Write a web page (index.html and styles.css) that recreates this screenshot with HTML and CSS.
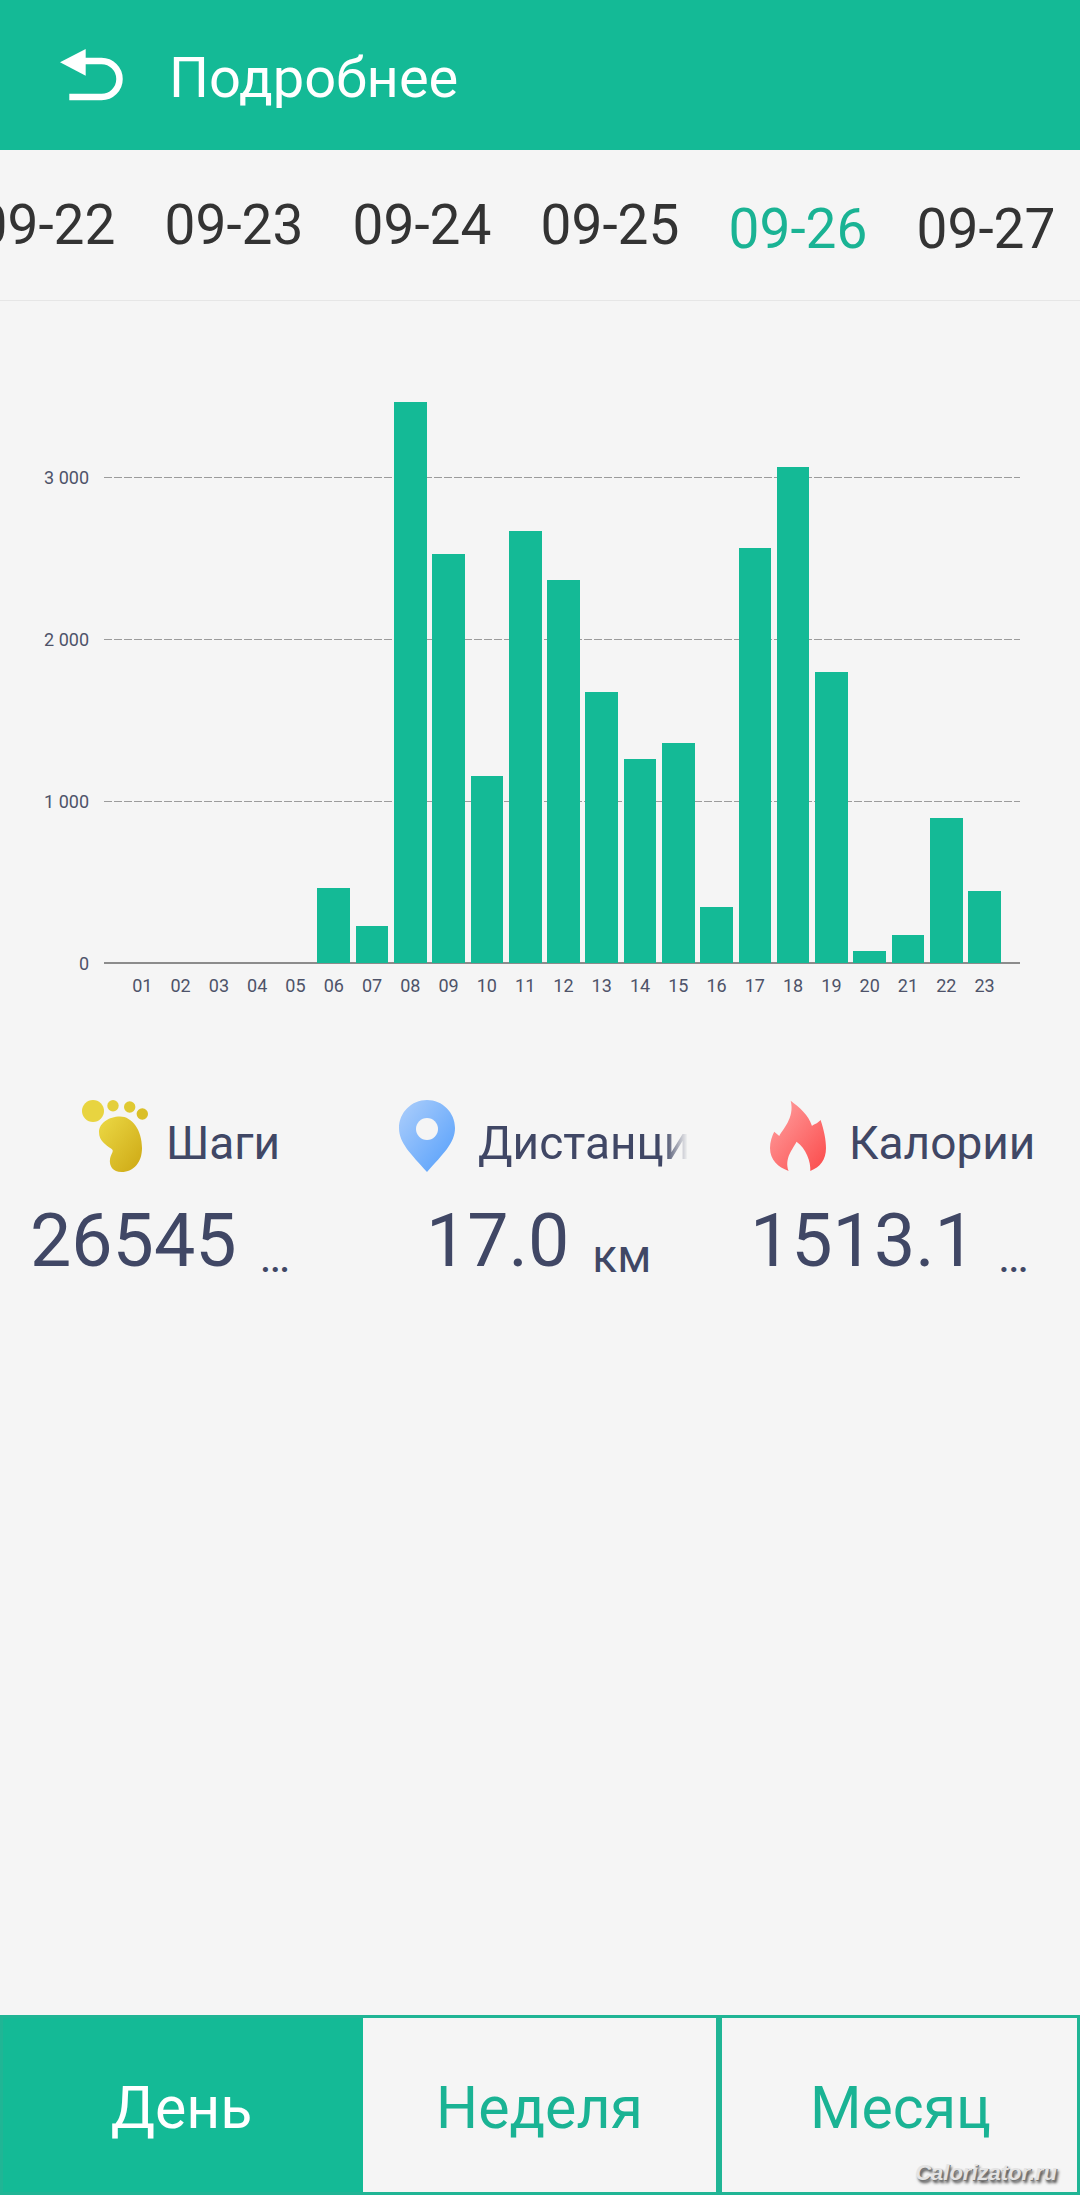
FILE: index.html
```html
<!DOCTYPE html>
<html lang="ru">
<head>
    <meta charset="UTF-8">
    <meta name="viewport" content="width=device-width, initial-scale=1.0">
    <title>Подробнее</title>
    <link rel="stylesheet" href="styles.css">
</head>
<body>
    <header class="topbar">
        <svg class="back-icon" width="64" height="52" viewBox="0 0 64 52">
            <path d="M25.7 0 0 13.3 25.7 26.7Z" fill="#fff"/>
            <path d="M24 12H41.5A18 18 0 0 1 41.5 48H9.3" fill="none" stroke="#fff" stroke-width="6.5"/>
        </svg>
        <h1>Подробнее</h1>
    </header>

    <div class="dates">
        <span class="date">09-22</span>
        <span class="date">09-23</span>
        <span class="date">09-24</span>
        <span class="date">09-25</span>
        <span class="date date-low active">09-26</span>
        <span class="date date-low">09-27</span>
    </div>

    <main class="content">
        <section class="chart">
            <div class="plot">
                <div class="grid-row"><span class="y-label">3 000</span><span class="grid-line"></span></div>
                <div class="grid-row"><span class="y-label">2 000</span><span class="grid-line"></span></div>
                <div class="grid-row"><span class="y-label">1 000</span><span class="grid-line"></span></div>
                <div class="grid-row grid-row-zero"><span class="y-label">0</span><span class="grid-line grid-line-zero"></span></div>
                <div class="bars">
                    <div class="bar"></div>
                    <div class="bar"></div>
                    <div class="bar"></div>
                    <div class="bar"></div>
                    <div class="bar"></div>
                    <div class="bar" style="height: 75px"></div>
                    <div class="bar" style="height: 37px"></div>
                    <div class="bar" style="height: 561px"></div>
                    <div class="bar" style="height: 409px"></div>
                    <div class="bar" style="height: 187px"></div>
                    <div class="bar" style="height: 432px"></div>
                    <div class="bar" style="height: 383px"></div>
                    <div class="bar" style="height: 271px"></div>
                    <div class="bar" style="height: 204px"></div>
                    <div class="bar" style="height: 220px"></div>
                    <div class="bar" style="height: 56px"></div>
                    <div class="bar" style="height: 415px"></div>
                    <div class="bar" style="height: 496px"></div>
                    <div class="bar" style="height: 291px"></div>
                    <div class="bar" style="height: 12px"></div>
                    <div class="bar" style="height: 28px"></div>
                    <div class="bar" style="height: 145px"></div>
                    <div class="bar" style="height: 72px"></div>
                </div>
            </div>
            <div class="x-labels">
                <span>01</span><span>02</span><span>03</span><span>04</span><span>05</span><span>06</span>
                <span>07</span><span>08</span><span>09</span><span>10</span><span>11</span><span>12</span>
                <span>13</span><span>14</span><span>15</span><span>16</span><span>17</span><span>18</span>
                <span>19</span><span>20</span><span>21</span><span>22</span><span>23</span>
            </div>
        </section>

        <section class="stats">
            <div class="stat stat-steps">
                <div class="stat-head">
                    <svg class="stat-icon" width="66" height="72" viewBox="0 0 66 72">
                        <defs>
                            <linearGradient id="footFill" x1="0" y1="0" x2="1" y2="1">
                                <stop offset="0" stop-color="#ecd945"/>
                                <stop offset="1" stop-color="#cda814"/>
                            </linearGradient>
                        </defs>
                        <circle cx="11" cy="11" r="11" fill="#e8d440"/>
                        <circle cx="31" cy="5.7" r="5.7" fill="#e4cf3a"/>
                        <circle cx="47.7" cy="7" r="5.7" fill="#e0c932"/>
                        <circle cx="60.3" cy="14" r="5.7" fill="#dabf28"/>
                        <path d="M38 16.5C50 16.5 60 30 60 48 60 62 52 72 39.5 72 31 72 27 66 28 59 29 53 33 51 29 48.5 24 45 17 41 17 32 17 23 27 16.5 38 16.5Z" fill="url(#footFill)"/>
                    </svg>
                    <span class="stat-label">Шаги</span>
                </div>
                <div class="stat-value"><span class="number">26545</span><span class="unit">…</span></div>
            </div>
            <div class="stat stat-distance">
                <div class="stat-head">
                    <svg class="stat-icon" width="56" height="72" viewBox="0 0 56 72">
                        <defs>
                            <linearGradient id="pinFill" x1="0" y1="0" x2="1" y2="1">
                                <stop offset="0" stop-color="#aecffb"/>
                                <stop offset="1" stop-color="#539efb"/>
                            </linearGradient>
                        </defs>
                        <path d="M28 0C43.5 0 56 12.5 56 28 56 43 44 54 28 72 12 54 0 43 0 28 0 12.5 12.5 0 28 0Z" fill="url(#pinFill)"/>
                        <circle cx="28" cy="29" r="11" fill="#f5f5f5"/>
                    </svg>
                    <span class="stat-label stat-label-fade">Дистанция</span>
                </div>
                <div class="stat-value"><span class="number">17.0</span><span class="unit">км</span></div>
            </div>
            <div class="stat stat-calories">
                <div class="stat-head">
                    <svg class="stat-icon" width="56" height="72" viewBox="0 0 56 72">
                        <defs>
                            <linearGradient id="flameFill" x1="0" y1="0" x2="1" y2="1">
                                <stop offset="0" stop-color="#ffa3a3"/>
                                <stop offset="1" stop-color="#fb4a4a"/>
                            </linearGradient>
                        </defs>
                        <path d="M20.7 .7C30 8 38 14 42 26 44 24 47 24 50.6 20 54 30 56 40 56 48 56 60 50 67 40.3 71 41 62 36 48 26.5 41.7 23 49 14 58 18.6 71 8 67 0 60 0 48 0 42 2 36 4.2 31.7L9.3 36C12 30 25 18 20.7 .7Z" fill="url(#flameFill)"/>
                    </svg>
                    <span class="stat-label">Калории</span>
                </div>
                <div class="stat-value"><span class="number">1513.1</span><span class="unit">…</span></div>
            </div>
        </section>
    </main>

    <nav class="tabs">
        <div class="tab active">День</div>
        <div class="tab tab-week">Неделя</div>
        <div class="tab tab-month">Месяц</div>
        <span class="watermark">Calorizator.ru</span>
    </nav>
</body>
</html>
```

FILE: styles.css
```css
* {
    box-sizing: border-box;
}
html, body {
    height: 100%;
}
body {
    margin: 0;
    display: flex;
    flex-direction: column;
    overflow: hidden;
    font-family: Roboto, "Noto Sans", sans-serif;
    background-color: #f5f5f5;
    color: #404765;
}
.topbar {
    display: flex;
    align-items: center;
    gap: 45px;
    height: 150px;
    padding: 0 0 0 60px;
    background-color: #14ba96;
    color: #fff;
}
.topbar h1 {
    margin: 0;
    padding-top: 5px;
    font-size: 56px;
    font-weight: 400;
}
.dates {
    display: flex;
    align-items: center;
    height: 151px;
    margin-left: -48px;
    border-bottom: 1px solid #e6e6e6;
}
.date {
    flex: 0 0 188px;
    text-align: center;
    font-size: 55px;
    color: #333;
}
.date-low {
    padding-top: 8px;
}
.date.active {
    color: #1ab394;
}
.content {
    flex: 1;
}
.chart {
    padding-top: 165px;
}
.plot {
    position: relative;
}
.grid-row {
    display: flex;
    align-items: center;
    height: 22px;
    margin-bottom: 140px;
    padding-right: 60px;
    font-size: 18px;
}
.grid-row-zero {
    margin-bottom: 0;
}
.y-label {
    width: 89px;
    margin-right: 15px;
    text-align: right;
    color: #4e5369;
}
.grid-line {
    flex: 1;
    height: 1px;
    background: repeating-linear-gradient(to right, #9c9c9c 0, #9c9c9c 8px, transparent 8px, transparent 10px);
}
.grid-line-zero {
    height: 2px;
    background: #8c8c8c;
}
.bars {
    position: absolute;
    left: 126px;
    bottom: 11px;
    display: grid;
    grid-template-columns: repeat(23, 32.7px);
    column-gap: 5.6px;
    align-items: end;
}
.bar {
    background-color: #14ba96;
}
.x-labels {
    display: grid;
    grid-template-columns: repeat(23, 32.7px);
    column-gap: 5.6px;
    margin: 1px 0 0 126px;
    font-size: 18px;
    line-height: 22px;
    text-align: center;
    color: #4e5369;
}
.stats {
    display: grid;
    grid-template-columns: repeat(3, 360px);
    margin-top: 103px;
}
.stat-head {
    display: flex;
    align-items: flex-end;
}
.stat-icon {
    flex: none;
}
.stat-label {
    margin-bottom: 2px;
    font-size: 46px;
    line-height: 54px;
    white-space: nowrap;
}
.stat-label-fade {
    width: 210px;
    overflow: hidden;
    mask-image: linear-gradient(to right, #000 186px, transparent 210px);
    -webkit-mask-image: linear-gradient(to right, #000 186px, transparent 210px);
}
.stat-value {
    margin-top: 27px;
    white-space: nowrap;
}
.number {
    font-size: 73.5px;
    line-height: 84px;
}
.unit {
    margin-left: 23px;
    font-size: 46px;
    vertical-align: -6px;
}
.stat-steps .stat-head {
    padding-left: 82px;
    gap: 18px;
}
.stat-steps .stat-value {
    padding-left: 30px;
}
.stat-distance .stat-head {
    padding-left: 39px;
    gap: 23px;
}
.stat-distance .stat-value {
    padding-left: 66px;
}
.stat-calories .stat-head {
    padding-left: 50px;
    gap: 23px;
}
.stat-calories .stat-value {
    padding-left: 30px;
}
.stat-calories .unit {
    margin-left: 22px;
}
.tabs {
    position: relative;
    display: grid;
    grid-template-columns: 360px 359px 1fr;
    height: 180px;
    border: 3px solid #20b595;
}
.tab {
    display: flex;
    align-items: center;
    justify-content: center;
    padding-top: 5px;
    font-size: 59px;
    color: #1ab394;
}
.tab.active {
    padding-right: 3px;
    background-color: #14ba96;
    color: #fff;
}
.tab-week {
    border-right: 6px solid #20b595;
}
.tab-month {
    padding-left: 2px;
}
.watermark {
    position: absolute;
    right: 20px;
    bottom: 6px;
    font-family: "Liberation Sans", sans-serif;
    font-size: 22px;
    font-weight: 700;
    font-style: italic;
    color: #e4e4e4;
    text-shadow: 1px 1px 0 #777, 2px 3px 3px #444;
}
```
